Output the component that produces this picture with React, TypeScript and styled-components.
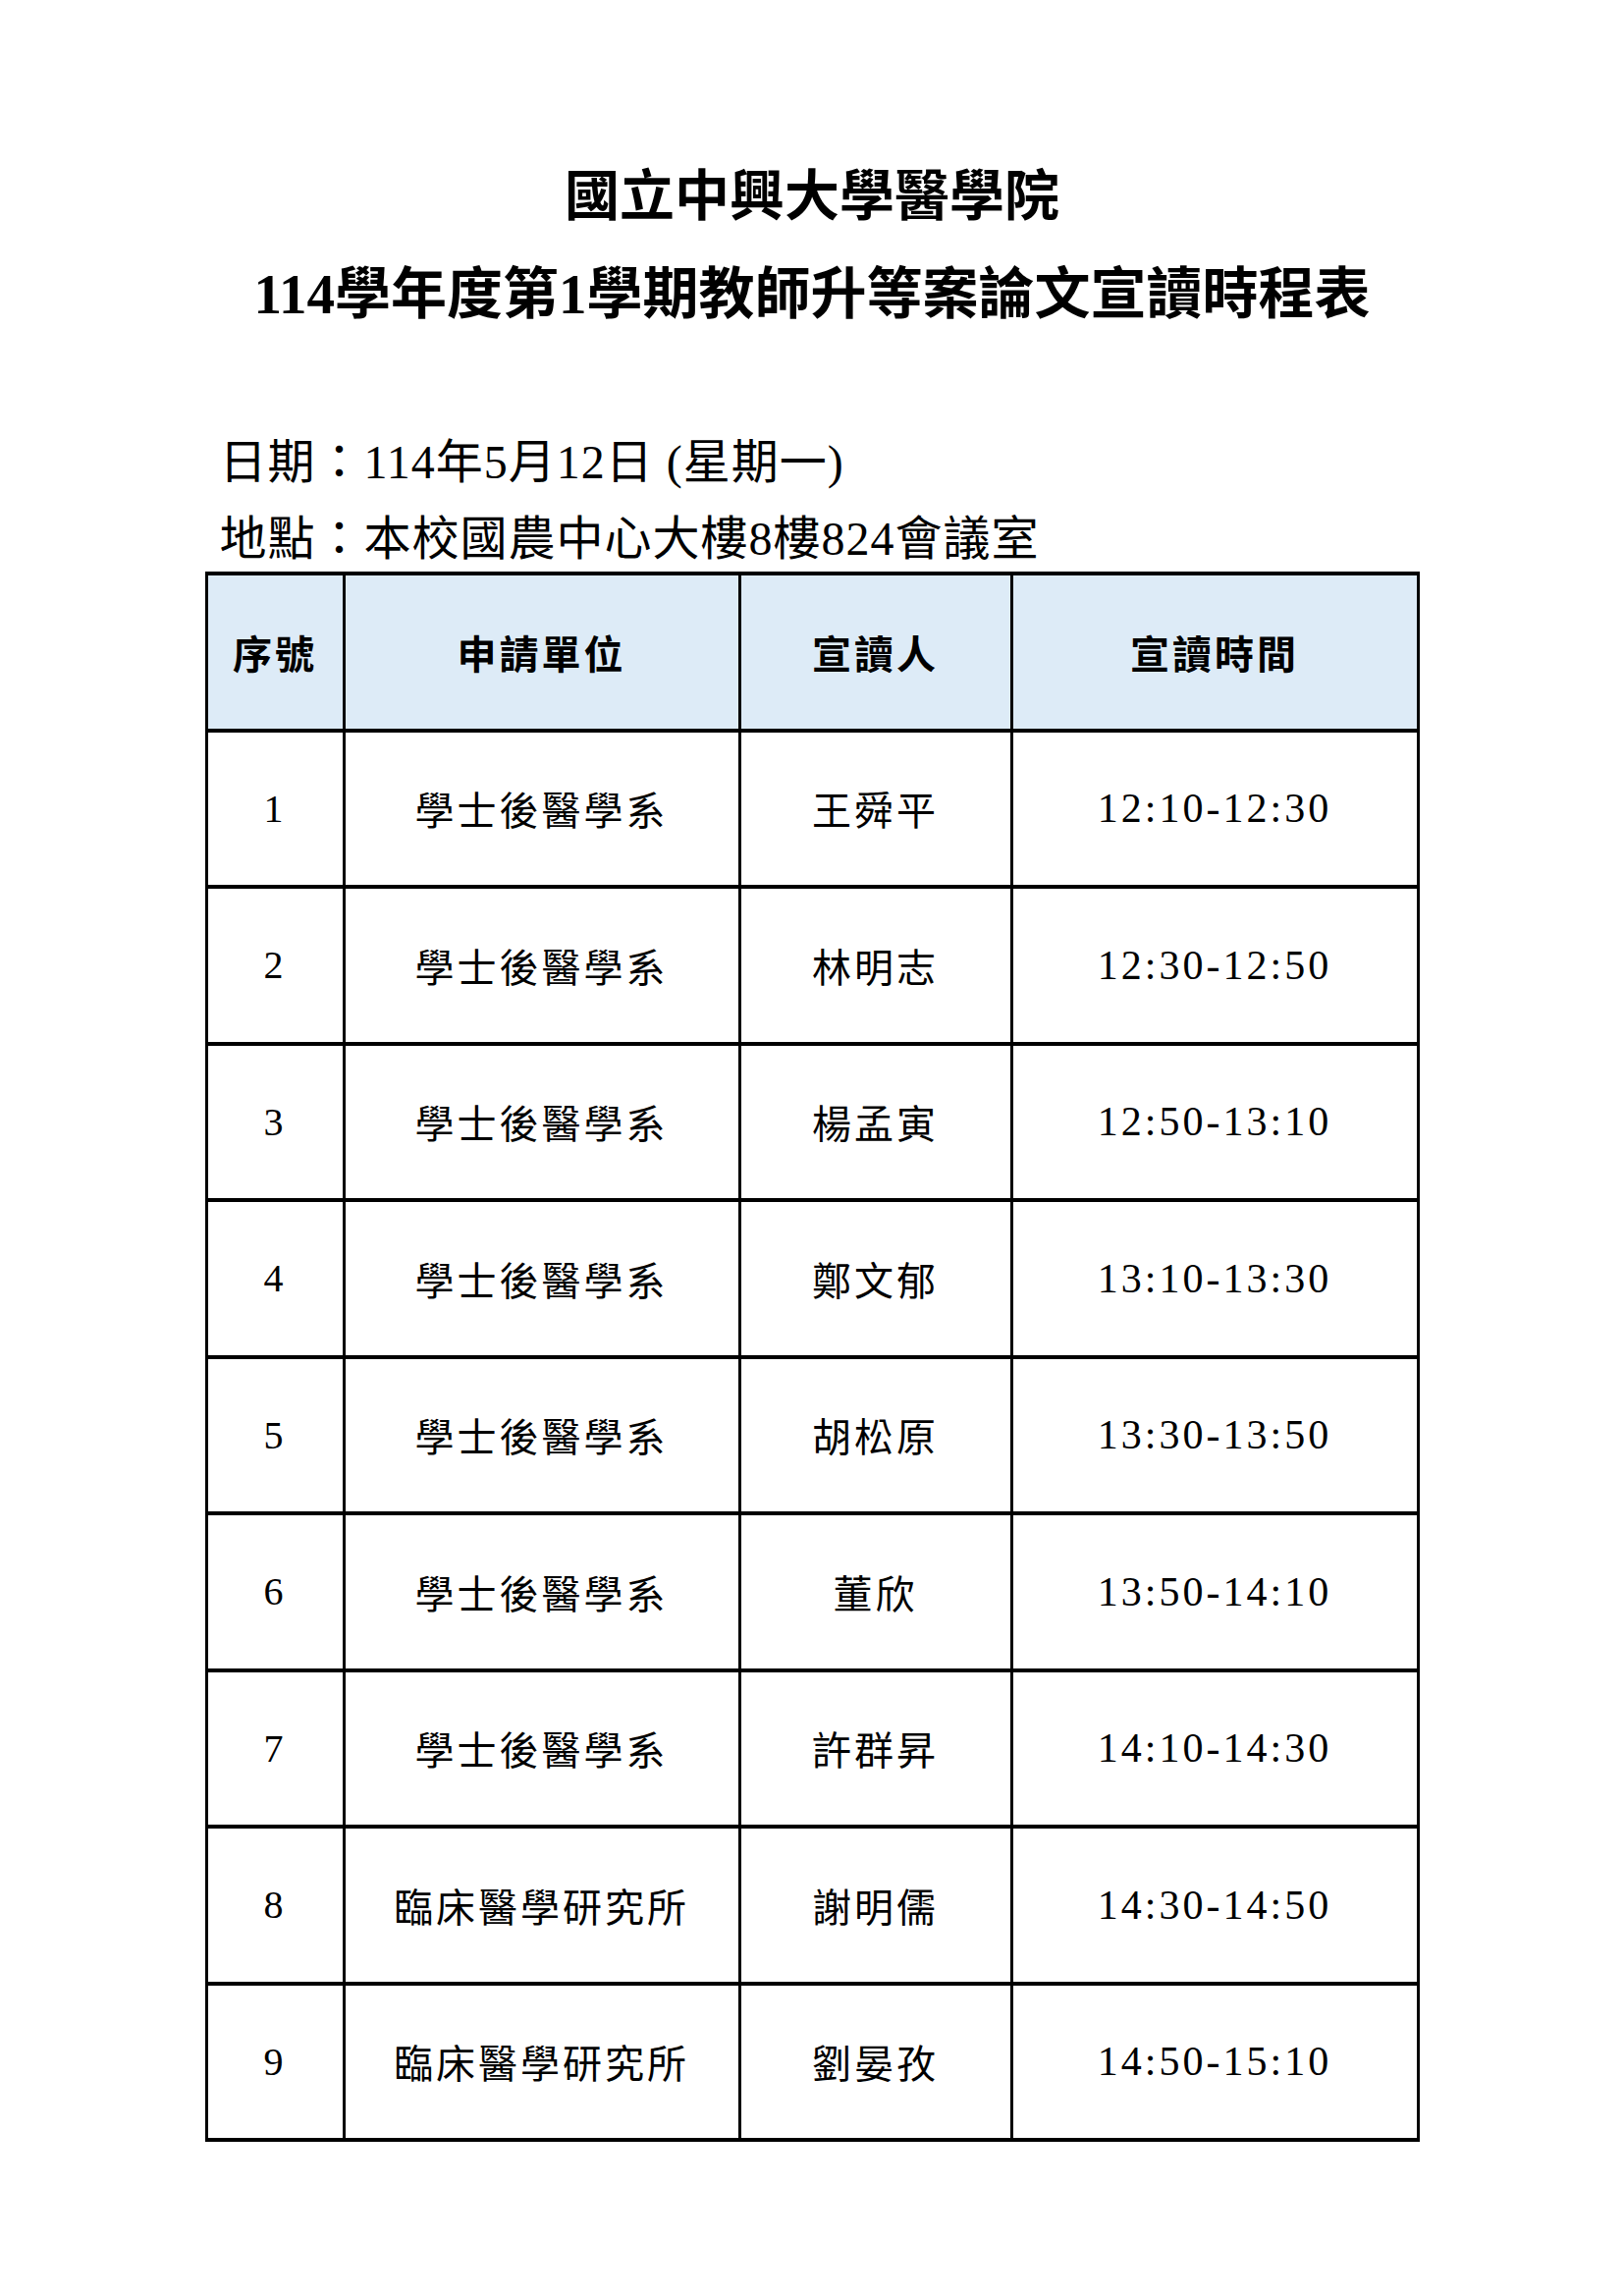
import React from 'react';
import styled, { createGlobalStyle } from 'styled-components';

interface Talk {
    no: number;
    unit: string;
    speaker: string;
    time: string;
}

const talks: Talk[] = [
    { no: 1, unit: '學士後醫學系', speaker: '王舜平', time: '12:10-12:30' },
    { no: 2, unit: '學士後醫學系', speaker: '林明志', time: '12:30-12:50' },
    { no: 3, unit: '學士後醫學系', speaker: '楊孟寅', time: '12:50-13:10' },
    { no: 4, unit: '學士後醫學系', speaker: '鄭文郁', time: '13:10-13:30' },
    { no: 5, unit: '學士後醫學系', speaker: '胡松原', time: '13:30-13:50' },
    { no: 6, unit: '學士後醫學系', speaker: '董欣', time: '13:50-14:10' },
    { no: 7, unit: '學士後醫學系', speaker: '許群昇', time: '14:10-14:30' },
    { no: 8, unit: '臨床醫學研究所', speaker: '謝明儒', time: '14:30-14:50' },
    { no: 9, unit: '臨床醫學研究所', speaker: '劉晏孜', time: '14:50-15:10' },
];

const GlobalStyle = createGlobalStyle`
    html, body {
        margin: 0;
        padding: 0;
        background: #ffffff;
    }
    body {
        font-family: "Liberation Serif", "Noto Sans CJK TC", serif;
        color: #000000;
    }
`;

const Page = styled.div`
    width: 1654px;
    min-height: 2338px;
    padding-top: 150px;
    box-sizing: border-box;
`;

const Sheet = styled.div`
    width: 1237px;
    margin: 0 auto;
    display: flex;
    flex-direction: column;
`;

const Title = styled.h1<{ $size: number }>`
    margin: 0;
    text-align: center;
    font-family: "Liberation Serif", "Noto Sans CJK TC", serif;
    font-weight: 700;
    font-size: ${(p) => p.$size}px;
    line-height: 100px;
    white-space: nowrap;
`;

const Info = styled.div`
    margin-top: 86px;
    padding-left: 15px;
    display: flex;
    flex-direction: column;
    gap: 8px;
`;

const InfoLine = styled.div`
    font-size: 48px;
    letter-spacing: 1px;
    line-height: 70px;
    white-space: nowrap;
`;

const Table = styled.table`
    margin-top: -2px;
    width: 1234px;
    table-layout: fixed;
    border-collapse: collapse;
    border: 3px solid #000;
`;

const Cell = styled.td<{ $head?: boolean }>`
    height: 155.5px;
    padding: 0;
    text-align: center;
    vertical-align: middle;
    border-left: 3px solid #000;
    border-right: 3px solid #000;
    border-top: 4px solid #000;
    border-bottom: 4px solid #000;
    background: ${(p) => (p.$head ? '#ddebf7' : '#ffffff')};
    font-size: 40px;
    font-weight: ${(p) => (p.$head ? 700 : 400)};
    letter-spacing: 3px;
    white-space: nowrap;
`;

const TimeCell = styled(Cell)`
    font-size: 42px;
`;

export default function App() {
    return (
        <Page>
            <GlobalStyle />
            <Sheet>
                <Title $size={56}>國立中興大學醫學院</Title>
                <Title $size={57}>114學年度第1學期教師升等案論文宣讀時程表</Title>
                <Info>
                    <InfoLine>日期：114年5月12日 (星期一)</InfoLine>
                    <InfoLine>地點：本校國農中心大樓8樓824會議室</InfoLine>
                </Info>
                <Table>
                    <colgroup>
                        <col style={{ width: 140 }} />
                        <col style={{ width: 403 }} />
                        <col style={{ width: 277 }} />
                        <col style={{ width: 414 }} />
                    </colgroup>
                    <thead>
                        <tr>
                            <Cell as="th" $head>序號</Cell>
                            <Cell as="th" $head>申請單位</Cell>
                            <Cell as="th" $head>宣讀人</Cell>
                            <Cell as="th" $head>宣讀時間</Cell>
                        </tr>
                    </thead>
                    <tbody>
                        {talks.map((t) => (
                            <tr key={t.no}>
                                <Cell>{t.no}</Cell>
                                <Cell>{t.unit}</Cell>
                                <Cell>{t.speaker}</Cell>
                                <TimeCell>{t.time}</TimeCell>
                            </tr>
                        ))}
                    </tbody>
                </Table>
            </Sheet>
        </Page>
    );
}
